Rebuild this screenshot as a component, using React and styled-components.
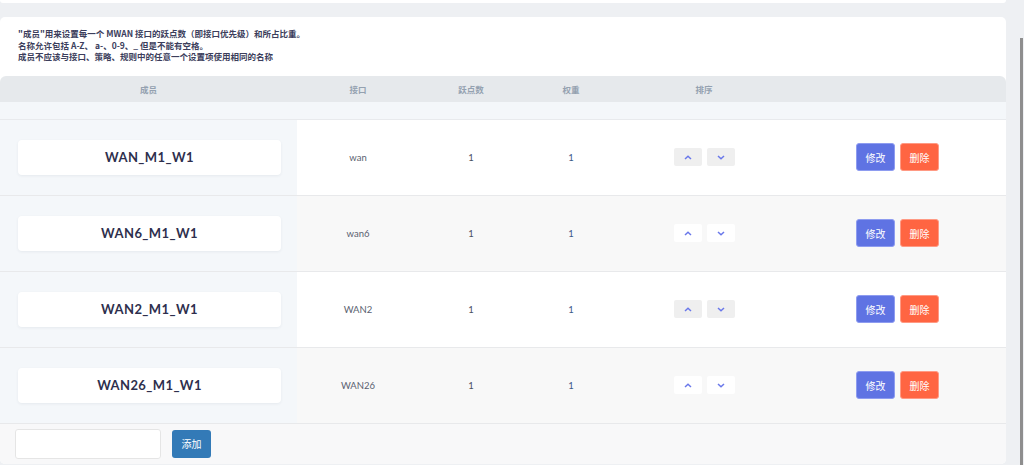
import React from "react";
import styled, { createGlobalStyle } from "styled-components";

const Global = createGlobalStyle`
  html, body { margin: 0; padding: 0; background: #eef0f3; overflow: hidden; }
  body { font-family: "Noto Sans", "Noto Sans CJK SC", sans-serif; }
  * { box-sizing: border-box; }
`;

const Page = styled.div`
  display: flex;
  width: 1024px;
  height: 465px;
  overflow: hidden;
`;

const Main = styled.div`
  width: 1006px;
  display: flex;
  flex-direction: column;
  gap: 14px;
`;

const Gutter = styled.div`
  flex: 1;
  display: flex;
  justify-content: flex-end;
  padding-right: 1px;
`;

const Thumb = styled.div`
  width: 3px;
  margin-top: 38px;
  background: #8e8e8e;
`;

const TopCard = styled.div`
  height: 3px;
  background: #fff;
  border-radius: 0 0 5px 5px;
`;

const Card = styled.div`
  background: #fff;
  border-radius: 5px;
  overflow: hidden;
  display: flex;
  flex-direction: column;
`;

const Desc = styled.div`
  padding: 11px 18px 13px;
  font-family: "Noto Sans CJK SC", sans-serif;
  font-size: 8.5px;
  font-weight: 700;
  line-height: 11.6px;
  color: #3c3e5c;
`;

const COLS = "297px 122px 104px 96px 170px 1fr";

const Header = styled.div`
  display: grid;
  grid-template-columns: ${COLS};
  height: 26px;
  background: #e6e9ec;
  border-radius: 6px 6px 0 0;
  align-items: center;
  font-family: "Noto Sans CJK SC", sans-serif;
  font-size: 8.5px;
  font-weight: 700;
  color: #94a1b0;
`;

const HCell = styled.div`
  text-align: center;
`;

const Spacer = styled.div`
  height: 18px;
  background: #f4f7fa;
  border-bottom: 1px solid #e8eaed;
`;

const Row = styled.div`
  display: grid;
  grid-template-columns: ${COLS};
  height: 76px;
  background: ${(p) => (p.$alt ? "#f8f8f8" : "#fff")};
  border-bottom: 1px solid #e8e9eb;
  align-items: stretch;
`;

const NameCell = styled.div`
  background: #f4f7fa;
  display: flex;
  align-items: center;
  padding: 0 16px 0 18px;
`;

const NameCard = styled.div`
  flex: 1;
  height: 35px;
  background: #fff;
  border-radius: 4px;
  box-shadow: 0 1px 3px rgba(40, 50, 80, 0.07);
  display: flex;
  align-items: center;
  justify-content: center;
  font-family: "Lato", "Inter", sans-serif;
  font-weight: 700;
  font-size: 13px;
  letter-spacing: 0.4px;
  color: #2e2f4d;
`;

const Cell = styled.div`
  display: flex;
  align-items: center;
  justify-content: center;
  font-family: "Lato", "Noto Sans", sans-serif;
  font-size: 9.5px;
  color: ${(p) => p.$color || "#5a5f70"};
`;

const SortGroup = styled.div`
  display: flex;
  gap: 5px;
  align-items: center;
  justify-content: center;
`;

const SortBtn = styled.button`
  width: 28px;
  height: 18px;
  border: none;
  border-radius: 2px;
  background: ${(p) => (p.$alt ? "#fff" : "#efefef")};
  display: flex;
  align-items: center;
  justify-content: center;
  padding: 0;
`;

const Actions = styled.div`
  display: flex;
  gap: 5px;
  align-items: center;
  justify-content: center;
`;

const ActBtn = styled.button`
  width: 39px;
  height: 28px;
  border-radius: 3px;
  border: 1px solid ${(p) => p.$border};
  background: ${(p) => p.$bg};
  color: #fff;
  font-family: "Noto Sans CJK SC", sans-serif;
  font-size: 10px;
  padding: 0;
`;

const Footer = styled.div`
  height: 40px;
  background: #f8f8f9;
  display: flex;
  align-items: center;
  gap: 11px;
  padding-left: 15px;
`;

const Input = styled.input`
  width: 146px;
  height: 30px;
  border: 1px solid #e5e5e5;
  border-radius: 3px;
  background: #fff;
  outline: none;
`;

const AddBtn = styled.button`
  width: 39px;
  height: 28px;
  border: none;
  border-radius: 3px;
  background: #337ab7;
  color: #fff;
  font-family: "Noto Sans CJK SC", sans-serif;
  font-size: 10px;
  padding: 0;
`;

const Chevron = ({ up }) => (
  <svg width="8" height="5" viewBox="0 0 8 5">
    <path
      d={up ? "M1 4 L4 1.2 L7 4" : "M1 1 L4 3.8 L7 1"}
      fill="none"
      stroke="#6a78ea"
      strokeWidth="1.5"
    />
  </svg>
);

const rows = [
  { name: "WAN_M1_W1", iface: "wan" },
  { name: "WAN6_M1_W1", iface: "wan6" },
  { name: "WAN2_M1_W1", iface: "WAN2" },
  { name: "WAN26_M1_W1", iface: "WAN26" },
];

export default function App() {
  return (
    <Page>
      <Global />
      <Main>
        <TopCard />
        <Card>
          <Desc>
            <div>"成员"用来设置每一个 MWAN 接口的跃点数（即接口优先级）和所占比重。</div>
            <div>名称允许包括 A-Z、 a-、0-9、_ 但是不能有空格。</div>
            <div>成员不应该与接口、策略、规则中的任意一个设置项使用相同的名称</div>
          </Desc>
          <Header>
            <HCell>成员</HCell>
            <HCell>接口</HCell>
            <HCell>跃点数</HCell>
            <HCell>权重</HCell>
            <HCell>排序</HCell>
            <HCell />
          </Header>
          <Spacer />
          {rows.map((r, i) => {
            const alt = i % 2 === 1;
            return (
              <Row key={r.name} $alt={alt}>
                <NameCell>
                  <NameCard>{r.name}</NameCard>
                </NameCell>
                <Cell>{r.iface}</Cell>
                <Cell $color="#4a5062">1</Cell>
                <Cell $color="#3d5a88">1</Cell>
                <SortGroup>
                  <SortBtn $alt={alt}>
                    <Chevron up />
                  </SortBtn>
                  <SortBtn $alt={alt}>
                    <Chevron />
                  </SortBtn>
                </SortGroup>
                <Actions>
                  <ActBtn $bg="#5f73e3" $border="#8e9cf0">修改</ActBtn>
                  <ActBtn $bg="#ff6542" $border="#ff9a84">删除</ActBtn>
                </Actions>
              </Row>
            );
          })}
          <Footer>
            <Input />
            <AddBtn>添加</AddBtn>
          </Footer>
        </Card>
      </Main>
      <Gutter>
        <Thumb />
      </Gutter>
    </Page>
  );
}
